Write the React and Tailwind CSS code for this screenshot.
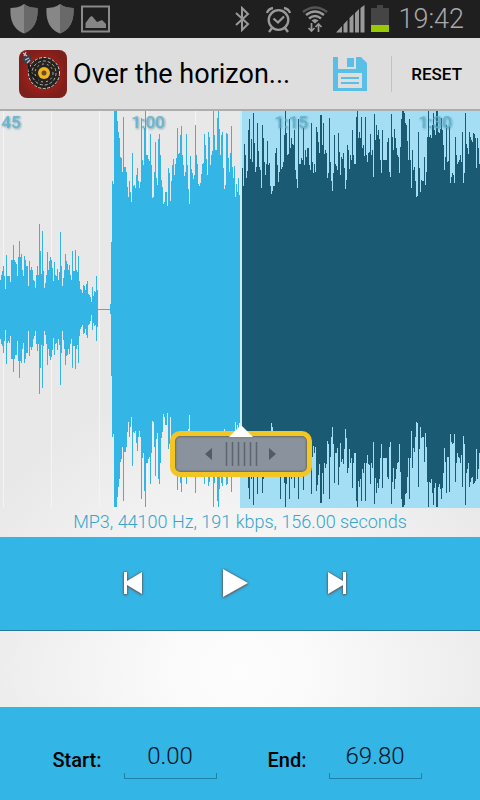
import React from "react";

const CENTER = 198;
const SELECTION_X = 241;
const BASELINE = 268;

// Height above the centre line, in thirds of a unit, for the quiet passage.
const QUIET = [
  180, 165, 155, 138, 170, 207, 105, 168, 170, 168, 187, 120, 120, 77, 120, 128, 132, 170, 112, 63,
  112, 104, 150, 168, 108, 120, 138, 138, 200, 125, 152, 143, 152, 180, 185, 204, 165, 140, 165, 13,
  93, 162, 33, 155, 204, 190, 165, 98, 150, 125, 113, 122, 145, 183, 128, 165, 168, 147, 180, 158,
  38, 138, 200, 175, 150, 102, 125, 132, 150, 135, 165, 180, 93, 155, 155, 90, 150, 158, 108, 185,
  208, 212, 220, 195, 198, 210, 192, 183, 222, 225, 232, 248, 203, 228, 215, 218, 170, 212,
].map((v) => (BASELINE - v) / 3);

const SILENCE = [0.5, 0.5, 0.5, 0.5, 0.5, 0.5, 0.5, 0.5, 0.5, 0.5, 0.5, 0.5, 5, 67];

// Distance of each peak from the top edge, in thirds of a unit, for the loud passage.
const LOUD = [
  228, 237, 18, 18, 18, 48, 80, 100, 155, 160, 200, 36, 185, 185, 200, 245, 275, 228, 260, 290,
  143, 243, 240, 248, 210, 188, 228, 248, 230, 40, 165, 180, 68, 18, 150, 150, 162, 168, 87, 180,
  278, 275, 200, 111, 220, 240, 102, 87, 150, 225, 245, 297, 290, 262, 262, 302, 190, 205, 288, 228,
  180, 162, 210, 178, 158, 69, 148, 145, 90, 63, 150, 180, 212, 200, 87, 180, 252, 296, 153, 192,
  205, 222, 210, 60, 150, 178, 237, 242, 235, 208, 178, 175, 87, 120, 162, 210, 81, 95, 180, 150,
  138, 18, 90, 135, 135, 38, 18, 72, 150, 90, 81, 190, 252, 240, 84, 87, 160, 200, 145, 63,
  185, 220, 183, 275, 237, 262, 218, 270, 190, 190, 190, 242, 117, 150, 220, 198, 75, 42, 162, 102,
  170, 24, 115, 200, 185, 55, 138, 187, 195, 248, 60, 100, 170, 210, 178, 108, 180, 175, 242, 268,
  258, 242, 242, 145, 130, 180, 230, 202, 42, 192, 185, 170, 90, 18, 85, 150, 148, 42, 130, 100,
  118, 120, 75, 195, 222, 248, 42, 178, 177, 160, 165, 69, 180, 135, 155, 130, 128, 180, 195, 55,
  170, 203, 178, 200, 66, 82, 112, 145, 30, 30, 120, 55, 148, 135, 145, 218, 205, 40, 170, 228,
  258, 205, 90, 178, 182, 195, 84, 140, 210, 155, 162, 145, 190, 252, 225, 120, 135, 192, 150, 165,
  75, 150, 178, 178, 36, 18, 98, 80, 100, 36, 130, 120, 152, 36, 150, 172, 145, 142, 87, 150,
  135, 215, 27, 105, 60, 90, 75, 102, 165, 205, 75, 165, 165, 165, 165, 110, 100, 200, 215, 27,
  95, 135, 72, 100, 130, 150, 155, 205, 125, 42, 18, 18, 24, 55, 60, 108, 165, 42, 165, 248,
  135, 195, 185, 228, 275, 272, 80, 190, 260, 225, 228, 228, 155, 240, 200, 95, 18, 95, 90, 100,
  60, 24, 75, 90, 18, 18, 80, 85, 72, 40, 75, 120, 195, 155, 60, 170, 168, 65, 235, 215,
  205, 210, 235, 95, 150, 178, 170, 165, 150, 172, 80, 233, 205, 24, 118, 130, 148, 80, 95, 105,
  110, 85, 88, 98, 190, 100, 130, 178,
].map((v) => CENTER + 6 - v / 3);

const AMPLITUDES = [...QUIET, ...SILENCE, ...LOUD];

function wavePath(from, to) {
  let d = "";
  for (let x = from; x < to && x < AMPLITUDES.length; x++) {
    const h = Math.max(1, Math.round(AMPLITUDES[x] * 2));
    const top = Math.round(CENTER - AMPLITUDES[x]);
    d += `M${x} ${top}h1v${h}h-1z`;
  }
  return d;
}

const GRID = [3, 51, 99, 147, 195, 243, 291, 339, 387, 435];
const TIMES = [
  [11, "45"],
  [148, "1:00"],
  [291, "1:15"],
  [435, "1:30"],
];

function Waveform() {
  return (
    <svg viewBox="0 0 480 397" className="block h-auto w-full" role="img" aria-label="Waveform">
      {GRID.map((x) => (
        <rect key={x} x={x} y="0" width="1" height="397" fill="#f4f4f4" />
      ))}
      <rect x="240" y="0" width="240" height="397" fill="#a4def5" />
      <path d={wavePath(0, SELECTION_X)} fill="#33b5e5" shapeRendering="crispEdges" />
      <path d={wavePath(SELECTION_X, 480)} fill="#1a5a73" shapeRendering="crispEdges" />
      <rect x="240" y="0" width="2" height="320" fill="#c9ecf8" />
      <g
        className="font-[Roboto,sans-serif] text-[17px] font-medium [filter:drop-shadow(1px_1px_1px_#4b8fa5)]"
        fill="#5fb0ca"
        fillOpacity="0.8"
        textAnchor="middle"
      >
        {TIMES.map(([x, t]) => (
          <text key={t} x={x} y="17">
            {t}
          </text>
        ))}
      </g>
    </svg>
  );
}

function Shield() {
  return (
    <svg width="30" height="32" viewBox="0 0 30 32" aria-hidden="true">
      <path d="M15 1C11 4 6 5 1.500 5C1 15 3 26 15 30.500C27 26 29 15 28.500 5C24 5 19 4 15 1Z" fill="#878787" />
      <path d="M15 1C19 4 24 5 28.500 5C29 15 27 26 15 30.500Z" fill="#696969" />
    </svg>
  );
}

function StatusBar() {
  return (
    <div className="flex h-[38px] items-center bg-[#1f1f1f] pl-[9px] pr-4 text-[#9a9a9a]">
      <div className="flex items-center gap-[6px]">
        <Shield />
        <Shield />
        <svg width="29" height="28" viewBox="0 0 29 28" aria-hidden="true">
          <rect x="1" y="1.500" width="27" height="25" fill="none" stroke="#8a8a8a" strokeWidth="2" />
          <path d="M4.500 23v-5l4.500-6 2-1 5 6 5-2 4 4v4z" fill="#858585" />
        </svg>
      </div>
      <div className="ml-auto flex items-center">
        <svg width="16" height="26" viewBox="0 0 16 26" className="mr-4" fill="none" stroke="currentColor" strokeWidth="2" aria-hidden="true">
          <path d="M2 7l12 11-6 6V2l6 6L2 19" />
        </svg>
        <svg width="25" height="27" viewBox="0 0 25 27" className="mr-[11px]" fill="none" stroke="currentColor" strokeWidth="2.300" aria-hidden="true">
          <circle cx="12.500" cy="14" r="9.800" />
          <path d="M7.500 12.500l4.500 4 6-6M1 7c1-3 3-4.500 6-5M24 7c-1-3-3-4.500-6-5M6 22l-3 4M19 22l3 4" />
        </svg>
        <svg width="26" height="28" viewBox="0 0 26 28" className="mr-2" fill="none" aria-hidden="true">
          <path d="M1 7Q13-2 25 7" stroke="#555" strokeWidth="2.500" />
          <path d="M4 10Q13 3 22 10M7 13.500Q13 8.500 19 13.500" stroke="currentColor" strokeWidth="2.500" />
          <path d="M9.500 15.500Q13 12.500 16.500 15.500L13 18.500Z" fill="currentColor" />
          <path d="M9.500 18v8M6.500 23l3 3 3-3M16.500 27v-8M13.500 22l3-3 3 3" stroke="currentColor" strokeWidth="1.700" />
        </svg>
        <svg width="29" height="28" viewBox="0 0 29 28" className="mr-[6px]" fill="#999" aria-hidden="true">
          <path d="M0 27.500L6 21v6.500zM7.500 19.500l4-4.500v12.500h-4zM13.500 13l4-4v18.500h-4zM19 8l4-4v23.500h-4zM24.500 3L28.500 0v27.500h-4z" />
        </svg>
        <svg width="18" height="28" viewBox="0 0 18 28" className="mr-[9px]" aria-hidden="true">
          <path d="M6 0h6v3h6v17H0V3h6z" fill="#454545" />
          <rect y="20" width="18" height="7" fill="#99cc00" />
        </svg>
        <time className="font-[Roboto,sans-serif] text-[27px] leading-8 font-light text-[#a8a8a8]">19:42</time>
      </div>
    </div>
  );
}

function AppIcon() {
  return (
    <svg width="48" height="48" viewBox="0 0 48 48" className="shrink-0" aria-hidden="true">
      <defs>
        <radialGradient id="iconRed">
          <stop offset="0.500" stopColor="#a51f19" />
          <stop offset="1" stopColor="#7f1f1b" />
        </radialGradient>
      </defs>
      <rect width="48" height="48" rx="8" fill="url(#iconRed)" />
      <circle cx="25" cy="23" r="16" fill="#242321" />
      <g fill="none" stroke="#d8d2bd">
        <circle cx="25" cy="23" r="15.500" strokeWidth="1" strokeDasharray="3 1.500" />
        <circle cx="25" cy="23" r="12" strokeWidth="0.800" strokeDasharray="3 2" />
        <circle cx="25" cy="23" r="9" strokeWidth="0.800" strokeDasharray="2 3" />
      </g>
      <circle cx="25" cy="23" r="6" fill="#efb51f" />
      <circle cx="25" cy="23" r="2.500" fill="#6e4a2c" />
      <path d="M9 11l2 12 8 7" fill="none" stroke="#171b20" strokeWidth="1.800" />
      <circle cx="8" cy="9" r="4.500" fill="#3a3f4d" />
      <path d="M4 3l4 3M6 10l4-2M8 13l3-3M7 2l-2 4" stroke="#c5c2c9" strokeWidth="1.200" />
    </svg>
  );
}

function Header() {
  return (
    <header className="flex h-[73px] items-center border-b-2 border-[#adadad] bg-[#dedede] pl-[19px] pr-[18px] font-[Roboto,sans-serif] text-black">
      <AppIcon />
      <h1 className="ml-[6px] min-w-0 flex-1 truncate text-[27px] leading-8 font-normal">Over the horizon...</h1>
      <button type="button" aria-label="Save" className="mr-6 shrink-0">
        <svg width="34" height="34" viewBox="0 0 34 34" className="block" aria-hidden="true">
          <path d="M0 0h28l6 6v28H0z" fill="#59bfe6" />
          <path d="M5 0h18v12H5z" fill="#dedede" />
          <path d="M14 1h7v9h-7z" fill="#59bfe6" />
          <path d="M5 16h24v15H5z" fill="#dedede" />
          <path d="M8 21h18M8 26h18" stroke="#59bfe6" strokeWidth="2" />
        </svg>
      </button>
      <div className="mr-[19px] h-9 w-px bg-[#c2c2c2]" />
      <button type="button" className="shrink-0 text-[17px] leading-6 font-medium">
        RESET
      </button>
    </header>
  );
}

function Handle() {
  return (
    <button
      type="button"
      aria-label="Move start marker"
      className="absolute bottom-[31px] left-1/2 ml-px h-[46px] w-[142px] -translate-x-1/2 rounded-[10px] border-[5px] border-[#f3c623] bg-[#8a939d] shadow-[inset_0_0_2px_1px_#6d6a5c]"
    >
      <svg width="132" height="36" viewBox="0 0 132 36" className="block" aria-hidden="true">
        <path d="M37 12v12l-7-6zM94 12v12l7-6z" fill="#535b64" />
        <path d="M51.500 6v24M57.500 6v24M63.500 6v24M69.500 6v24M75.500 6v24M81.500 6v24" stroke="#5d656e" strokeWidth="1.500" />
      </svg>
      <svg width="24" height="12" viewBox="0 0 24 12" className="absolute -top-[11px] left-[54px]" aria-hidden="true">
        <path d="M0 12L12 0l12 12z" fill="#fff" />
      </svg>
    </button>
  );
}

function Controls() {
  const icon = "block overflow-visible [filter:drop-shadow(0_0_1px_#555)_drop-shadow(0_1px_1px_#667)]";
  return (
    <div className="flex h-[94px] items-center justify-center gap-[76px] border-b border-[#257a9d] bg-[#33b5e5] pr-[10px] pb-[2px]">
      <button type="button" aria-label="Rewind">
        <svg width="24" height="30" viewBox="0 0 24 30" className={icon} fill="#fff">
          <path d="M3 4h3v9L21 4v22L6 17v9H3z" />
        </svg>
      </button>
      <button type="button" aria-label="Play">
        <svg width="28" height="30" viewBox="0 0 28 30" className={icon} fill="#fff">
          <path d="M2 1l25 14L2 29z" />
        </svg>
      </button>
      <button type="button" aria-label="Fast forward">
        <svg width="24" height="30" viewBox="0 0 24 30" className={icon} fill="#fff">
          <path d="M21 4h-3v9L3 4v22l15-9v9h3z" />
        </svg>
      </button>
    </div>
  );
}

function TimeField({ id, label, value }) {
  return (
    <div className="flex items-center">
      <label htmlFor={id} className="text-[20px] leading-6 font-medium">
        {label}
      </label>
      <div className="ml-[22px] w-[93px]">
        <input
          id={id}
          type="text"
          inputMode="decimal"
          defaultValue={value}
          className="block h-8 w-full bg-transparent pb-[2px] text-center text-[24px] leading-8 font-light text-[#03131f] outline-none"
        />
        <div className="h-[6px] border-x border-b border-[#1e83ab]" />
      </div>
    </div>
  );
}

export default function App() {
  return (
    <div className="flex min-h-screen flex-col bg-[#e8e8e8] bg-[radial-gradient(circle_300px_at_50%_84%,#fdfdfd_0%,#fafafa_25%,#e8e8e8_100%)] font-[Roboto,sans-serif]">
      <StatusBar />
      <Header />
      <main className="flex flex-1 flex-col">
        <section className="relative overflow-hidden">
          <Waveform />
          <Handle />
        </section>
        <p className="pb-px text-center text-[18px] leading-7 font-light text-[#35a6cd]">
          MP3, 44100 Hz, 191 kbps, 156.00 seconds
        </p>
        <Controls />
        <div className="min-h-[76px] flex-1" />
        <div className="flex h-[93px] items-center justify-center gap-[51px] bg-[#33b5e5] pt-3 pr-[6px] text-black">
          <TimeField id="start" label="Start:" value="0.00" />
          <TimeField id="end" label="End:" value="69.80" />
        </div>
      </main>
    </div>
  );
}
